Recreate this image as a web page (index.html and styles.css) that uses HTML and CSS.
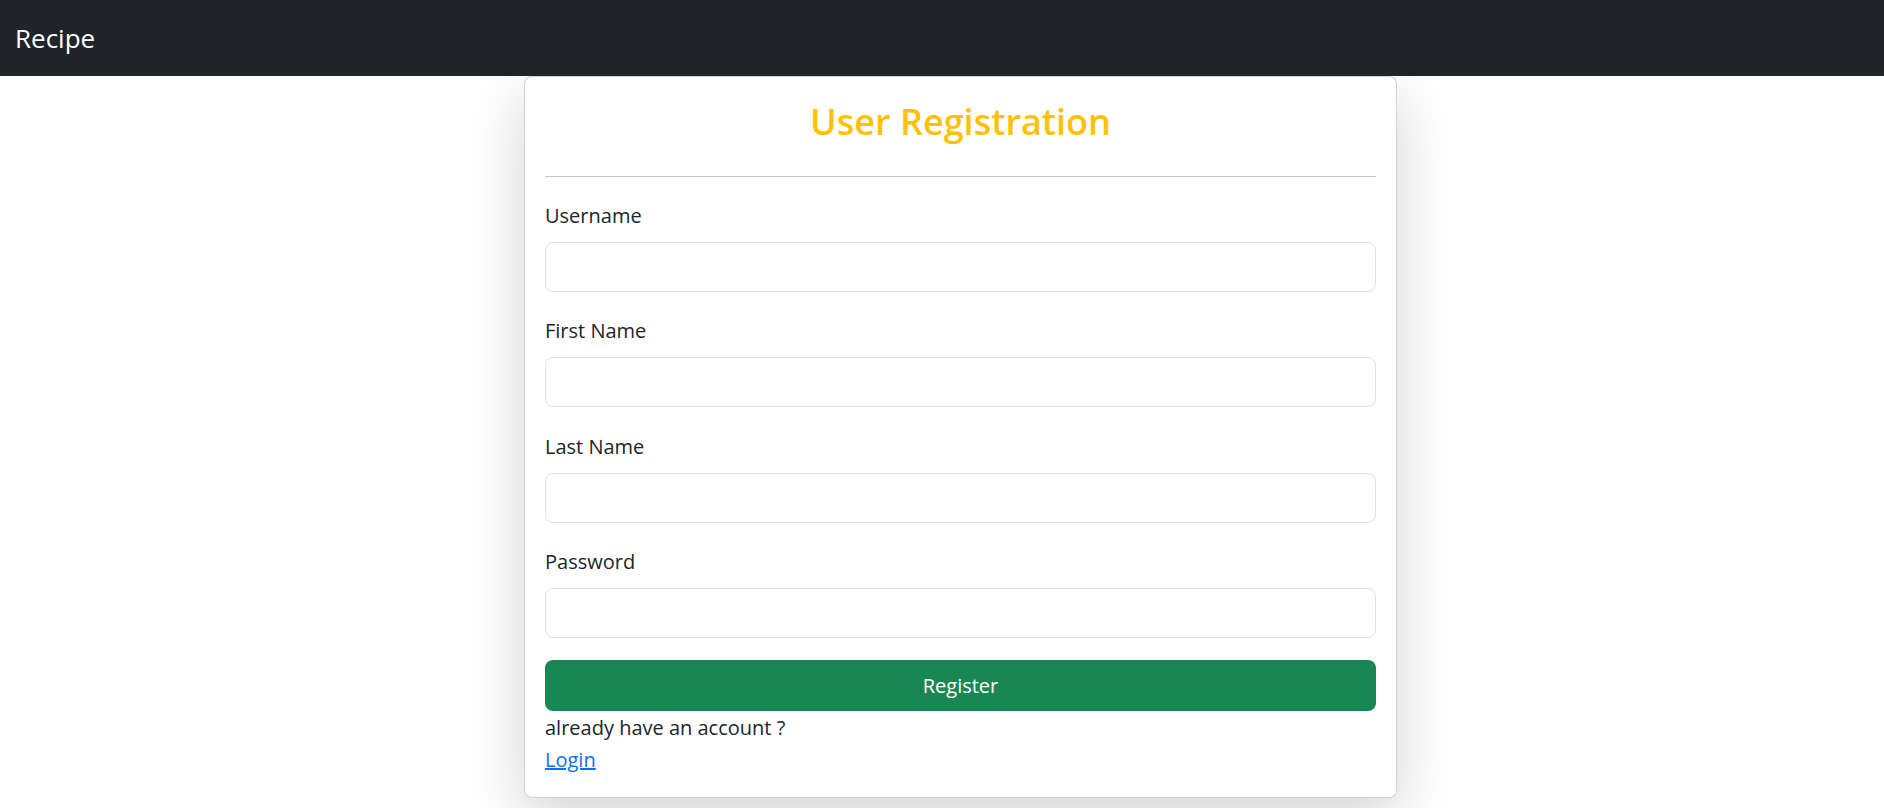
FILE: index.html
```html
<!DOCTYPE html>
<html lang="en">
<head>
<meta charset="utf-8">
<title>Recipe - Register</title>
<link rel="stylesheet" href="styles.css">
</head>
<body>
<nav class="navbar"><span class="brand">Recipe</span></nav>
<main class="page">
  <section class="card">
    <h2 class="title">User Registration</h2>
    <hr class="divider">
    <form class="form">
      <div class="field">
        <label class="label" for="username">Username</label>
        <input class="input" id="username" type="text">
      </div>
      <div class="field">
        <label class="label" for="first">First Name</label>
        <input class="input" id="first" type="text">
      </div>
      <div class="field">
        <label class="label" for="last">Last Name</label>
        <input class="input" id="last" type="text">
      </div>
      <div class="field field-last">
        <label class="label" for="password">Password</label>
        <input class="input" id="password" type="password">
      </div>
      <button class="btn" type="button">Register</button>
      <div class="links">
        <p class="hint">already have an account ?</p>
        <a class="link" href="#">Login</a>
      </div>
    </form>
  </section>
</main>
</body>
</html>
```
FILE: styles.css
```css
* { box-sizing: border-box; }
html, body { margin: 0; padding: 0; }
body {
  font-family: "Open Sans", "Noto Sans", sans-serif;
  font-size: 20px;
  color: #212529;
  background: #fff;
  height: 808px;
  overflow: hidden;
}
.navbar {
  background: #212529;
  height: 76px;
  padding-left: 15px;
  line-height: 76px;
}
.brand {
  color: #fff;
  font-size: 26px;
}
.page {
  display: flex;
  justify-content: center;
  padding-left: 37px;
}
.card {
  width: 873px;
  border: 1px solid rgba(0,0,0,.175);
  border-radius: 8px;
  background: #fff;
  padding: 21px 20px 21px;
  box-shadow: 0 20px 60px rgba(0,0,0,.175);
}
.title {
  margin: 0;
  text-align: center;
  color: #ffc107;
  font-size: 36px;
  font-weight: 600;
  line-height: 48px;
}
.divider {
  margin: 30px 0 24px;
  border: 0;
  border-top: 1px solid #c6c7c8;
  height: 0;
}
.form { display: flex; flex-direction: column; }
.field { display: flex; flex-direction: column; margin-bottom: 24.3px; }
.field-last { margin-bottom: 22px; }
.label {
  line-height: 30px;
  margin-bottom: 11px;
}
.input {
  height: 50px;
  border: 1px solid #dee2e6;
  border-radius: 8px;
  font: inherit;
  padding: 0 15px;
  background: #fff;
}
.btn {
  height: 51px;
  border: 0;
  border-radius: 8px;
  background: #198754;
  color: #fff;
  font: inherit;
  padding: 0;
}
.links {
  margin-top: 1px;
  line-height: 32px;
}
.hint { margin: 0; }
.link { color: #0d6efd; text-decoration: underline; }
```
